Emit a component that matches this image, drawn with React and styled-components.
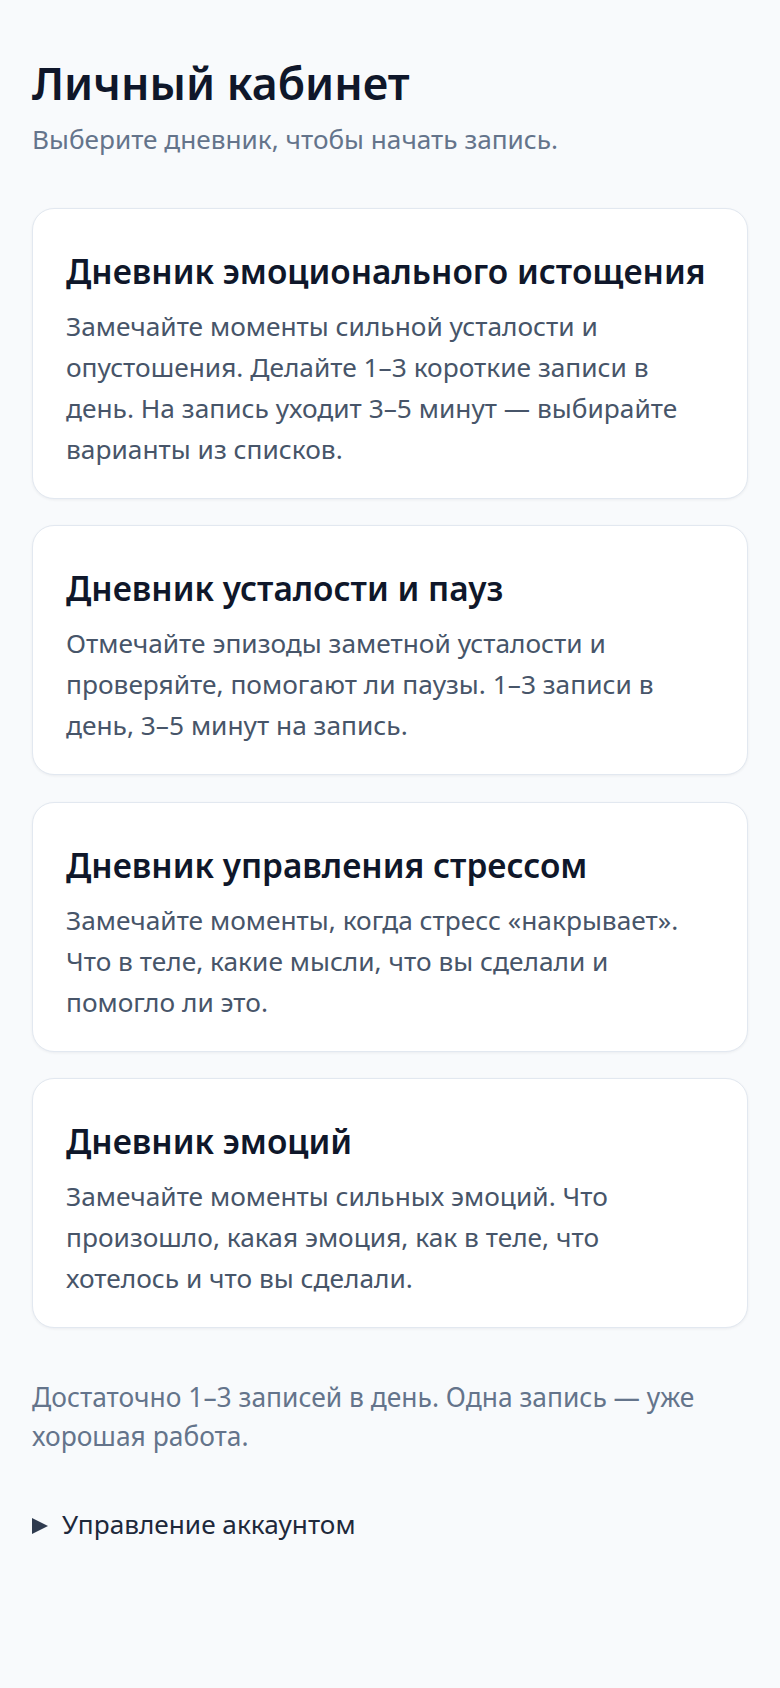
import React from 'react';
import styled, { createGlobalStyle } from 'styled-components';

const GlobalStyle = createGlobalStyle`
  html, body {
    margin: 0;
    padding: 0;
    background: #f8fafc;
  }
  body {
    font-family: "Noto Sans", "Open Sans", sans-serif;
    -webkit-font-smoothing: antialiased;
  }
`;

const Page = styled.main`
  min-height: 1688px;
  box-sizing: border-box;
  padding: 56px 32px 40px;
  background: #f8fafc;
`;

const Title = styled.h1`
  margin: 0;
  font-size: 44.6px;
  line-height: 1.2;
  font-weight: 600;
  color: #0f172a;
`;

const Subtitle = styled.p`
  margin: 10.7px 0 0;
  font-size: 26.2px;
  line-height: 1.5;
  color: #64748b;
`;

const DiaryList = styled.div`
  display: flex;
  flex-direction: column;
  gap: 26.5px;
  margin-top: 48.5px;
`;

const DiaryCard = styled.a`
  display: block;
  padding: 29px 33px 28px;
  background: #ffffff;
  border: 1px solid #e2e8f0;
  border-radius: 22px;
  box-shadow: 0 1px 3px rgba(15, 23, 42, 0.06);
  text-decoration: none;
  cursor: pointer;
`;

const CardTitle = styled.h2`
  margin: 12px 0 0;
  font-size: 33.4px;
  line-height: 1.3;
  font-weight: 600;
  color: #0f172a;
  white-space: nowrap;
`;

const CardText = styled.p`
  margin: 12.5px 0 0;
  font-size: 26.3px;
  line-height: 41px;
  color: #475569;
`;

const Note = styled.p`
  margin: 50px 0 0;
  font-size: 26.4px;
  line-height: 39px;
  color: #64748b;
`;

const Account = styled.details`
  margin-top: 49px;
`;

const AccountSummary = styled.summary`
  display: flex;
  align-items: center;
  gap: 14px;
  list-style: none;
  font-size: 26.2px;
  line-height: 1.5;
  color: #1e293b;
  cursor: pointer;
  &::-webkit-details-marker {
    display: none;
  }
`;

const Marker = styled.span`
  flex: none;
  width: 0;
  height: 0;
  margin-top: 2px;
  border-left: 16px solid #2f3b4f;
  border-top: 8.5px solid transparent;
  border-bottom: 8.5px solid transparent;
  transform: ${(props) => (props.open ? 'rotate(90deg)' : 'none')};
`;

const diaries = [
  {
    id: 'exhaustion',
    title: 'Дневник эмоционального истощения',
    text: 'Замечайте моменты сильной усталости и опустошения. Делайте 1–3 короткие записи в день. На запись уходит 3–5 минут — выбирайте варианты из списков.',
  },
  {
    id: 'fatigue',
    title: 'Дневник усталости и пауз',
    text: 'Отмечайте эпизоды заметной усталости и проверяйте, помогают ли паузы. 1–3 записи в день, 3–5 минут на запись.',
  },
  {
    id: 'stress',
    title: 'Дневник управления стрессом',
    text: 'Замечайте моменты, когда стресс «накрывает». Что в теле, какие мысли, что вы сделали и помогло ли это.',
  },
  {
    id: 'emotions',
    title: 'Дневник эмоций',
    text: 'Замечайте моменты сильных эмоций. Что произошло, какая эмоция, как в теле, что хотелось и что вы сделали.',
  },
];

export default function App() {
  const [open, setOpen] = React.useState(false);

  return (
    <>
      <GlobalStyle />
      <Page>
        <Title>Личный кабинет</Title>
        <Subtitle>Выберите дневник, чтобы начать запись.</Subtitle>

        <DiaryList>
          {diaries.map((d) => (
            <DiaryCard key={d.id}>
              <CardTitle>{d.title}</CardTitle>
              <CardText>{d.text}</CardText>
            </DiaryCard>
          ))}
        </DiaryList>

        <Note>Достаточно 1–3 записей в день. Одна запись — уже хорошая работа.</Note>

        <Account open={open} onToggle={(e) => setOpen(e.currentTarget.open)}>
          <AccountSummary>
            <Marker open={open} />
            Управление аккаунтом
          </AccountSummary>
        </Account>
      </Page>
    </>
  );
}
